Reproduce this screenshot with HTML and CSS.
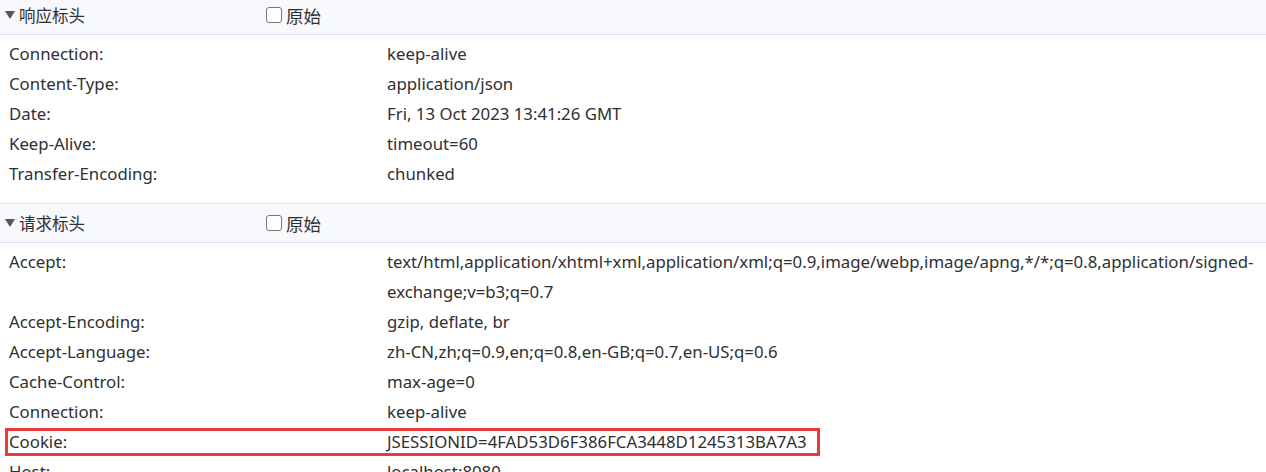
FILE: index.html
```html
<!DOCTYPE html>
<html lang="zh-CN">
<head>
<meta charset="utf-8">
<link rel="stylesheet" href="styles.css">
</head>
<body>
<div class="panel">
  <section class="sec">
    <div class="sec-head">
      <span class="caret"></span>
      <span class="sec-title">响应标头</span>
      <label class="raw"><span class="box"></span>原始</label>
    </div>
    <div class="rows">
      <div class="row"><div class="k">Connection:</div><div class="v">keep-alive</div></div>
      <div class="row"><div class="k">Content-Type:</div><div class="v">application/json</div></div>
      <div class="row"><div class="k">Date:</div><div class="v">Fri, 13 Oct 2023 13:41:26 GMT</div></div>
      <div class="row"><div class="k">Keep-Alive:</div><div class="v">timeout=60</div></div>
      <div class="row"><div class="k">Transfer-Encoding:</div><div class="v">chunked</div></div>
    </div>
  </section>
  <section class="sec">
    <div class="sec-head">
      <span class="caret"></span>
      <span class="sec-title">请求标头</span>
      <label class="raw"><span class="box"></span>原始</label>
    </div>
    <div class="rows">
      <div class="row"><div class="k">Accept:</div><div class="v">text/html,application/xhtml+xml,application/xml;q=0.9,image/webp,image/apng,*/*;q=0.8,application/signed-exchange;v=b3;q=0.7</div></div>
      <div class="row"><div class="k">Accept-Encoding:</div><div class="v">gzip, deflate, br</div></div>
      <div class="row"><div class="k">Accept-Language:</div><div class="v">zh-CN,zh;q=0.9,en;q=0.8,en-GB;q=0.7,en-US;q=0.6</div></div>
      <div class="row"><div class="k">Cache-Control:</div><div class="v">max-age=0</div></div>
      <div class="row"><div class="k">Connection:</div><div class="v">keep-alive</div></div>
      <div class="row mark"><div class="k">Cookie:</div><div class="v">JSESSIONID=4FAD53D6F386FCA3448D1245313BA7A3</div><span class="hl"></span></div>
      <div class="row"><div class="k">Host:</div><div class="v">localhost:8080</div></div>
    </div>
  </section>
</div>
</body>
</html>
```
FILE: styles.css
```css
html, body {
  margin: 0;
  padding: 0;
  background: #ffffff;
  overflow: hidden;
}
body {
  font-family: "Noto Sans", "Noto Sans CJK SC", sans-serif;
  font-size: 16.8px;
  color: #303030;
}
.panel {
  margin-top: -5px;
}
.sec-head {
  display: flex;
  align-items: center;
  height: 38px;
  background: #f7f9fd;
  border-top: 1px solid #d6e2f5;
  border-bottom: 1px solid #d6e2f5;
  padding-left: 5px;
  color: #303030;
}
.caret {
  width: 0;
  height: 0;
  border-left: 5px solid transparent;
  border-right: 5px solid transparent;
  border-top: 8px solid #555;
  margin-right: 4px;
}
.sec-title {
  width: 247px;
  font-size: 16.5px;
}
.raw {
  display: flex;
  align-items: center;
  gap: 4px;
  font-size: 17.5px;
}
.box {
  width: 14px;
  height: 14px;
  border: 1.5px solid #767676;
  border-radius: 3px;
  background: #fff;
}
.rows {
  padding: 4px 0 14px;
}
.row {
  position: relative;
  display: flex;
  line-height: 30px;
}
.k {
  width: 378px;
  flex: none;
  padding-left: 9px;
}
.v {
  flex: 1;
  min-width: 0;
  padding-right: 6px;
}
.hl {
  position: absolute;
  left: 5px;
  top: 1px;
  width: 809px;
  height: 22px;
  border: 3px solid #ec3a3a;
  pointer-events: none;
}
```
